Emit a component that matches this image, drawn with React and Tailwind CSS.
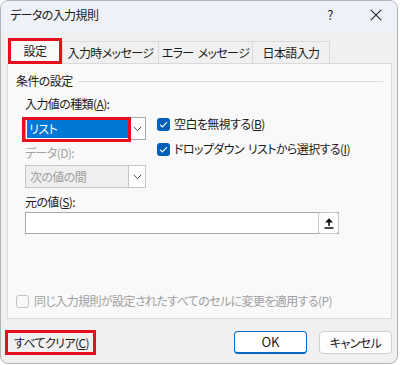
import React from 'react';

const font = "font-['Noto_Sans_CJK_JP','Noto_Sans',sans-serif] [font-feature-settings:'palt']";

function Chevron() {
  return (
    <svg width="9" height="6" viewBox="0 0 9 6" fill="none">
      <path d="M0.8 1 L4.5 4.6 L8.2 1" stroke="#444" strokeWidth="1" />
    </svg>
  );
}

function CheckBox({ checked }) {
  if (checked) {
    return (
      <span className="w-[13px] h-[13px] rounded-[3px] bg-[#005fb8] flex items-center justify-center shrink-0">
        <svg width="9" height="7" viewBox="0 0 9 7" fill="none">
          <path d="M1 3.6 L3.4 5.9 L8 1.2" stroke="#fff" strokeWidth="1.2" />
        </svg>
      </span>
    );
  }
  return <span className="w-[13px] h-[13px] rounded-[3px] border border-[#c4c4c4] bg-[#f9f9f9] shrink-0" />;
}

export default function App() {
  return (
    <div className={`w-[400px] h-[365px] bg-white ${font} text-[12px] leading-[16px] tracking-[-0.6px] text-[#1b1b1b] whitespace-nowrap`}>
      <div className="w-[398px] h-[364px] rounded-[8px] border border-[#b4b4b4] bg-[#f0f0f0] overflow-hidden flex flex-col">
        {/* title bar */}
        <div className="h-[31px] bg-[#eef2f8] flex items-center pl-[9px] shrink-0">
          <span className="flex-1 -mt-[3px]">データの入力規則</span>
          <span className="w-[20px] text-center text-[13px] -mt-[3px] mr-[26px]">?</span>
          <span className="w-[20px] flex justify-center -mt-[3px] mr-[11px]">
            <svg width="12" height="12" viewBox="0 0 12 12" fill="none">
              <path d="M0.8 0.8 L11.2 11.2 M11.2 0.8 L0.8 11.2" stroke="#222" strokeWidth="1.1" />
            </svg>
          </span>
        </div>

        {/* tabs */}
        <div className="flex items-end h-[25px] mt-[6px] pl-[7px] shrink-0 relative z-10">
          <div className="w-[54px] h-[26px] -mb-[1px] border-[3px] border-[#e60f1e] bg-[#f9f9f9] flex items-center justify-center">
            <span className="-mt-[1px]">設定</span>
          </div>
          <div className="w-[97px] h-[22px] border border-b-0 border-[#d9d9d9] flex items-center justify-center">入力時メッセージ</div>
          <div className="w-[95px] h-[22px] -ml-px border border-b-0 border-[#d9d9d9] flex items-center justify-center">
            エラー<span className="ml-[4px]">メッセージ</span>
          </div>
          <div className="w-[78px] h-[22px] -ml-px border border-b-0 border-[#d9d9d9] flex items-center justify-center">日本語入力</div>
        </div>

        {/* panel */}
        <div className="ml-[6px] w-[385px] h-[256px] border border-[#dadada] bg-[#f9f9f9] shrink-0 flex flex-col">
          <div className="flex items-center gap-[5px] mt-[9px] pl-[8px] pr-[8px]">
            <span>条件の設定</span>
            <span className="flex-1 h-px bg-[#dcdcdc] mt-[1px]" />
          </div>

          <div className="pl-[17px]">
            <div className="mt-[7px]">入力値の種類(<span className="underline">A</span>):</div>

            <div className="flex mt-[5px]">
              <div className="w-[121px] flex flex-col">
                <div className="relative w-[121px] h-[23px] border border-[#a8a8a8] bg-white flex">
                  <div className="flex-1 m-[1px] bg-[#0078d4] text-white flex items-center pl-[2px]">リスト</div>
                  <div className="w-[16px] flex items-center justify-center">
                    <Chevron />
                  </div>
                  <div className="absolute -left-[4px] -top-[1px] w-[109px] h-[25px] border-[3px] border-[#e60f1e]" />
                </div>
                <div className="mt-[5px] text-[#a0a0a0]">データ(D):</div>
                <div className="mt-[4px] w-[121px] h-[23px] border border-[#c6c6c6] bg-[#efefef] flex">
                  <div className="flex-1 flex items-center pl-[4px] text-[#a0a0a0]">次の値の間</div>
                  <div className="w-[17px] bg-white border-l border-[#c6c6c6] flex items-center justify-center">
                    <Chevron />
                  </div>
                </div>
              </div>

              <div className="ml-[11px] flex flex-col -mt-[1px]">
                <div className="flex items-center gap-[4px]">
                  <CheckBox checked />
                  <span>空白を無視する(<span className="underline">B</span>)</span>
                </div>
                <div className="flex items-center gap-[4px] mt-[9px]">
                  <CheckBox checked />
                  <span>
                    ドロップダウン<span className="ml-[4px]">リストから選択する(<span className="underline">I</span>)</span>
                  </span>
                </div>
              </div>
            </div>

            <div className="mt-[6px]">元の値(<span className="underline">S</span>):</div>
            <div className="mt-[2px] w-[314px] h-[22px] border border-[#a8a8a8] bg-white flex justify-end">
              <div className="w-[21px] h-[22px] -mt-px -mr-px rounded-[3px] border border-[#c8c8c8] bg-white flex items-center justify-center">
                <svg width="10" height="12" viewBox="0 0 10 12" fill="none">
                  <path d="M5 9 V2.5" stroke="#111" strokeWidth="1.6" />
                  <path d="M1 5.6 L5 1.2 L9 5.6 Z" fill="#111" />
                  <path d="M0.5 11 H9.5" stroke="#111" strokeWidth="1.4" />
                </svg>
              </div>
            </div>
          </div>

          <div className="flex items-center gap-[5px] pl-[8px] mt-[59px] text-[#a0a0a0]">
            <CheckBox />
            <span>同じ入力規則が設定されたすべてのセルに変更を適用する(P)</span>
          </div>
        </div>

        {/* buttons */}
        <div className="flex items-center mt-[11px] pl-[4px] shrink-0">
          <div className="w-[91px] h-[25px] border-[3px] border-[#e60f1e] flex items-center pl-[6px]">
            <span>すべてクリア(<span className="underline">C</span>)</span>
          </div>
          <div className="flex-1" />
          <div className="w-[73px] h-[23px] rounded-[4px] border border-[#0067c0] border-b-[2px] bg-white flex items-center justify-center text-[13px] tracking-normal">OK</div>
          <div className="ml-[12px] mr-[5px] w-[73px] h-[23px] rounded-[4px] border border-[#d0d0d0] bg-[#fdfdfd] flex items-center justify-center">キャンセル</div>
        </div>
      </div>
    </div>
  );
}
